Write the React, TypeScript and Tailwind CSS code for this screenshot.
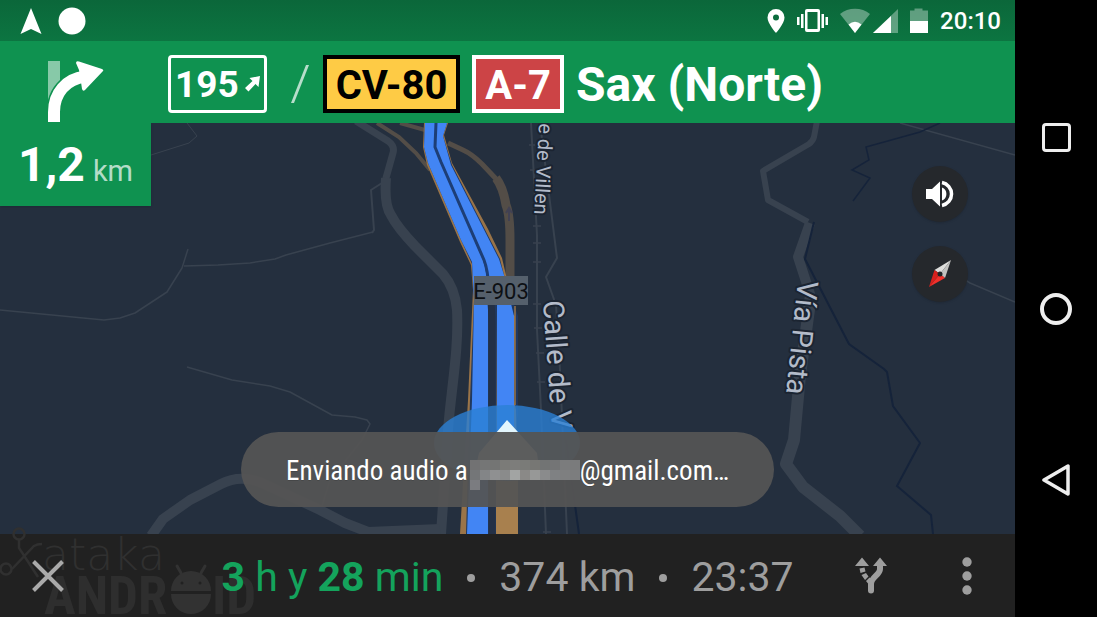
import React from "react";

function StatusBar() {
  return (
    <header className="flex h-[41px] items-center justify-between bg-linear-to-b from-[#0b673a] to-[#0c7541] pr-3.5 pl-5 text-white">
      <div className="flex items-center gap-4">
        <svg width="22" height="28" viewBox="0 0 22 28" fill="#fff" aria-hidden="true">
          <path d="M11 1 21.500 27 11 22 .5 27Z" />
        </svg>
        <svg width="28" height="28" viewBox="0 0 28 28" fill="#fff" aria-hidden="true">
          <circle cx="14" cy="14" r="13.500" />
        </svg>
      </div>
      <div className="flex items-center gap-3">
        <svg width="18" height="26" viewBox="0 0 18 26" fill="#fff" aria-hidden="true">
          <path fillRule="evenodd" d="M9 1a8.500 8.500 0 0 0-8.500 8.500C.5 15.500 9 25 9 25s8.500-9.500 8.500-15.500A8.500 8.500 0 0 0 9 1Zm0 5.500a3 3 0 1 1 0 6 3 3 0 0 1 0-6Z" />
        </svg>
        <svg width="31" height="26" viewBox="0 0 31 26" fill="#fff" aria-hidden="true">
          <path fillRule="evenodd" d="M10 1h11a2 2 0 0 1 2 2v19a2 2 0 0 1-2 2H10a2 2 0 0 1-2-2V3a2 2 0 0 1 2-2Zm.5 3v17h10V4Z" />
          <path d="M4 6h2.500v14H4zM0 9h2.500v8H0zM24.500 6H27v14h-2.500zM28.500 9H31v8h-2.500z" />
        </svg>
        <svg width="58" height="26" viewBox="0 0 58 26" fill="#fff" aria-hidden="true">
          <path opacity=".35" d="M0 6C8-1 22-1 30 6L15 25Z" />
          <path d="M8.500 16.500Q15 11 21.500 16.500L15 25Z" />
          <path opacity=".35" d="M58 1v24H33Z" />
          <path d="M51 8v17H33Z" />
        </svg>
        <svg width="18" height="26" viewBox="0 0 18 26" fill="#fff" aria-hidden="true">
          <path opacity=".35" d="M4.500 0.500h8v2H18V13H0V2.500h4.500z" />
          <path d="M0 13h18v12H0z" />
        </svg>
        <time className="text-2xl font-medium">20:10</time>
      </div>
    </header>
  );
}

function DirectionHeader() {
  return (
    <section className="relative z-10 flex h-[82px] items-center bg-[#0f9250] pt-1 text-white">
      <div className="flex w-[151px] shrink-0 self-end pl-12">
        <svg width="56" height="62" viewBox="0 0 56 62" aria-label="Gira a la derecha" role="img">
          <path d="M0 0h12v40H0z" fill="#fff" opacity=".5" />
          <path d="M6 61V51C6 32 18 18 37 15.500" fill="none" stroke="#0f9250" strokeWidth="15" />
          <path d="M6 61V51C6 32 18 18 37 15.500" fill="none" stroke="#fff" strokeWidth="12" />
          <path d="M28 2Q28-.5 31 .5L54 8Q56 9 55 10L37 29Q35 31 34 28L33 21 31 9Z" fill="#fff" />
        </svg>
      </div>
      <div className="flex items-center gap-3 pl-[17px] leading-none font-bold">
        <span className="flex h-[58px] items-center gap-1.5 rounded border-[3px] border-white px-1 text-[37px]">
          195
          <svg width="15" height="16" viewBox="0 0 15 16" fill="#fff" aria-hidden="true">
            <path d="M4.500 2 15 0 13.500 11 10.500 8 3.500 15.500 0 12 7.500 5Z" />
          </svg>
        </span>
        <span className="flex w-8 justify-end pr-0.5">
          <svg width="18" height="38" viewBox="0 0 18 38" aria-hidden="true">
            <path d="M15 0h3L3 38H0Z" fill="#fff" opacity=".7" />
          </svg>
        </span>
        <span className="flex h-[58px] items-center border-4 border-black bg-[#fecb45] px-[9px] pt-1 text-[40px] text-black">CV-80</span>
        <span className="flex h-[58px] items-center border-4 border-white bg-[#cc4446] px-[9px] pt-1 text-[40px]">A-7</span>
        <h1 className="pt-0.5 text-5xl whitespace-nowrap">Sax (Norte)</h1>
      </div>
    </section>
  );
}

function MapCanvas() {
  const label = "fill-[#b3bbc9] stroke-[#1b2431] stroke-[4px] font-normal";
  return (
    <svg className="absolute inset-0 h-full w-full" viewBox="0 123 1015 411" preserveAspectRatio="xMidYMid slice" role="img" aria-label="Mapa">
      <rect y="123" width="1015" height="411" fill="#242f3e" />
      <g fill="none" stroke="#38424f" strokeLinejoin="round">
        <path strokeWidth="1" d="M187 123 197 136 189 143 151 155" />
        <path strokeWidth="1.500" d="M0 310 104 320 120 318 135 313 167 292 182 268 188 249M184 266 218 265 250 263 275 259 286 255 330 243 373 232M187 367 232 380 270 386 290 392 332 415 355 417 367 420 370 424 362 440 330 480 322 506M900 123 1015 155M940 264 970 283 1015 302" />
        <path strokeWidth="2" d="M382 183 371 190 374 230 372 233M540 123 557 258 546 277 556 305 560 370 567 534" />
        <path strokeWidth="7" d="M356 121 388 141Q395 146 393 153L386 178Q384 205 391 215 397 227 415 246L443 274" />
        <path strokeWidth="10" d="M386 178Q384 205 391 215 397 227 415 246L443 274Q455 288 457 310C459 350 451 390 448 430L441 534" />
        <path strokeWidth="10" d="M151 536 163 519 190 500 221 484Q240 474 262 483L320 510 345 523 368 532 440 529" />
        <path strokeWidth="6" d="M817 121 814 137Q813 141 809 144L763 171 768 200 808 222" />
        <path strokeWidth="10" d="M810 223 798 257 811 297" />
        <path strokeWidth="12" d="M811 295 800 375 794 440 786 464 803 487 840 516 860 536" />
        <path strokeWidth="2" d="M531 123 537 235V330L541 410 546 534" />
        <path strokeWidth="1.500" d="M529 145h6M530 170h7M533 226h8M533 243h8M533 262h8M533 304h8M534 328h8M536 353h8M537 382h8M543 532h8" />
      </g>
      <g fill="none" stroke="#15233a" strokeWidth="2">
        <path d="M940 123 920 132 866 147 869 160 852 170 870 178 853 201" strokeWidth="1.500" />
        <path d="M814 222 805 259 849 344 884 369 887 372 893 406 920 443 897 486 931 515 933 534M566 440 579 534" />
      </g>
      <g fill="none" stroke="#534d47">
        <path strokeWidth="4" d="M377 123 399 137 416 153 430 170M400 123 425 130" />
        <path strokeWidth="5" d="M448 143 463 150Q472 154 482 164L499 182" />
        <path strokeWidth="9" d="M496 178Q503 187 506 205 510 215 510 240V290" />
      </g>
      <path d="M509 221v-13m-3 5 3-5 3 5" fill="none" stroke="#414153" strokeWidth="2" />

      <path d="M424 123 423 147 427 165 460 242 471 265 473 290 468 400 460 534H490V305H496V534H518L516 400V316L506 275 502 258 488 229 452 163 444 135 448 123Z" fill="#9a7448" />
      <path d="M425 123 424 147 428 163 461 240 472 264 474 300 470 400 466 534H496L497 305 515 316 514 400 518 420V316L504 275 500 259 452 165 443 136 447 123Z" fill="#20385f" />
      <path d="M425 123 424 147 428 163 461 240 472 262 474 300 472 400 467 534H488V300Q488 275 483 260L440 160 435 147 436 123Z" fill="#4285f4" />
      <path d="M436 123 435 147 440 160 483 258Q489 272 489 285L497 305V534H514V316L504 275 499 259 451 165 443 136 447 123Z" fill="#4285f4" />
      <path d="M436 123 435 147 441 162 484 260Q488 270 489 290" fill="none" stroke="#1d3e76" strokeWidth="3" />
      <path d="M489 290Q492 302 492 330V534" fill="none" stroke="#233046" strokeWidth="7" />
      <path d="M515 306V405" stroke="#9a7448" strokeWidth="1.500" />
      <path d="M496 475H518V534H496Z" fill="#a8804e" />

      <rect x="474" y="276" width="54" height="29" fill="#55606c" />
      <text x="501" y="299" textAnchor="middle" className="fill-[#0d1014] text-[22px]">E-903</text>
      <g paintOrder="stroke" strokeLinejoin="round">
        <text transform="translate(539 123) rotate(93)" className={label + " text-[20px]"}>e de Villen</text>
        <text transform="translate(543 301) rotate(86)" className={label + " text-[29px]"}>Calle de V</text>
        <text transform="translate(798 280) rotate(96)" className={label + " text-[29px]"}>Vía Pista</text>
      </g>
      <ellipse cx="507" cy="443" rx="73" ry="38" fill="#2a7fd4" opacity=".8" />
      <path d="M507 420 537 453 540 475 507 462 474 475 479 453Z" fill="#e3f6fd" />
    </svg>
  );
}

const mosaic = [
  "#727273", "#757676", "#747574", "#7b7b78", "#7d7d7b", "#7a7b78", "#777774", "#727474", "#747576", "#7b7c7d", "#7a7b7c",
  "#747678", "#838587", "#8f9091", "#8a8b8b", "#a2a4a3", "#8a8987", "#979897", "#8a8b8c", "#7f8183", "#7e7f80", "#7c7d7e",
];

function Toast() {
  return (
    <div role="status" className="flex h-[75px] items-center rounded-full bg-[#545454]/95 px-[45px] pt-1 text-[27px] whitespace-nowrap text-white text-shadow-2xs [font-family:'Roboto_Condensed',Roboto,sans-serif]">
      Enviando audio a
      <svg className="mt-1.5 ml-0.5" width="110" height="30" viewBox="0 0 110 30" shapeRendering="crispEdges" aria-hidden="true">
        {mosaic.map((color, i) => (
          <rect key={i} x={(i % 11) * 10} y={Math.floor(i / 11) * 10} width="10" height="10" fill={color} />
        ))}
        <rect y="20" width="10" height="10" fill="#7b7c80" />
      </svg>
      @gmail.com…
    </div>
  );
}

function RoundButton({ label, children }: { label: string; children: React.ReactNode }) {
  return (
    <button aria-label={label} className="flex size-14 items-center justify-center rounded-full bg-[#25282c] shadow-sm">
      {children}
    </button>
  );
}

function MapArea() {
  return (
    <section className="relative flex flex-1 flex-col justify-between overflow-hidden">
      <MapCanvas />
      <div className="relative flex items-start justify-between pr-[47px]">
        <p className="flex h-[83px] w-[151px] items-baseline justify-center gap-2 bg-[#0f9250] pt-2.5 leading-none text-white shadow">
          <span className="text-5xl leading-16 font-bold">1,2</span>
          <span className="text-[29px] text-white/70">km</span>
        </p>
        <div className="flex flex-col gap-6 pt-[43px]">
          <RoundButton label="Sonido">
            <svg width="28" height="28" viewBox="0 0 28 28" fill="#fff" aria-hidden="true">
              <path d="M0 9h6l8-7.500v25L6 19H0zM16 7.500a7 7 0 0 1 0 13z" />
              <path d="M16 2.500A11.700 11.700 0 0 1 16 25.500" fill="none" stroke="#fff" strokeWidth="3.500" />
            </svg>
          </RoundButton>
          <RoundButton label="Brújula">
            <svg width="28" height="30" viewBox="0 0 28 30" aria-hidden="true">
              <path d="M25 1 8.500 11 14 15Z" fill="#dededc" />
              <path d="M25 1 19 19 14 15Z" fill="#c2c2c0" />
              <path d="M3 28 8.500 11 14 15Z" fill="#d8201d" />
              <path d="M3 28 19 19 14 15Z" fill="#f1302b" />
              <circle cx="14" cy="15" r="2.500" fill="#202326" />
            </svg>
          </RoundButton>
        </div>
      </div>
      <div className="relative flex justify-center pb-[27px]">
        <Toast />
      </div>
    </section>
  );
}

function Watermark() {
  return (
    <svg className="pointer-events-none absolute bottom-0 left-0" width="270" height="90" viewBox="0 0 270 90" aria-hidden="true">
      <g fill="none" stroke="#303030" strokeWidth="2.500">
        <circle cx="19" cy="7" r="5.500" />
        <circle cx="6" cy="42" r="5.500" />
        <path d="M19 13v8L38 50M12 42 34 19Q37 17 42 17" />
      </g>
      <text x="42" y="43" className="fill-[#303030] text-[44px] font-extralight [font-family:'DejaVu_Sans',sans-serif]">ataka</text>
      <g className="fill-[#2e2e2e] text-[53px] font-bold [font-family:'Roboto_Condensed',sans-serif]">
        <text x="44" y="87">ANDR</text>
        <text x="212" y="87">ID</text>
      </g>
      <g fill="#323232">
        <path d="M171 64a20 20 0 0 1 40 0ZM171 67h40a20 20 0 0 1-40 0Z" />
        <path d="M181 46 177 39M201 46 205 39" stroke="#323232" strokeWidth="3" strokeLinecap="round" />
        <circle cx="182" cy="56" r="1.500" fill="#212121" />
        <circle cx="200" cy="56" r="1.500" fill="#212121" />
      </g>
    </svg>
  );
}

function TripBar() {
  return (
    <footer className="relative grid h-[83px] grid-cols-[1fr_auto_1fr] items-center bg-[#212121] text-[#9e9e9e]">
      <Watermark />
      <button aria-label="Cerrar" className="relative flex h-full w-24 items-center justify-center">
        <svg width="32" height="32" viewBox="0 0 32 32" fill="none" stroke="#aaa" strokeWidth="4" aria-hidden="true">
          <path d="M1.500 1.500 30.500 30.500M30.500 1.500 1.500 30.500" />
        </svg>
      </button>
      <p className="relative flex items-center gap-6 pt-1 text-[41px] leading-none whitespace-nowrap">
        <span className="text-[#14a35c]">
          <b>3</b> h y <b>28</b> min
        </span>
        <span className="size-2 rounded-full bg-[#9e9e9e]" />
        <span>374 km</span>
        <span className="size-2 rounded-full bg-[#9e9e9e]" />
        <span>23:37</span>
      </p>
      <div className="flex h-full justify-end">
        <button aria-label="Rutas alternativas" className="flex w-24 items-center justify-center">
          <svg width="32" height="37" viewBox="0 0 32 37" fill="#9e9e9e" aria-hidden="true">
            <path d="M7 .5 14 9H0ZM25 .5 32 9H18Z" />
            <path d="M25 8v4C25 18 16 20 16 27v6" fill="none" stroke="#9e9e9e" strokeWidth="6" />
            <path d="M13 32h6v1.500a3 3 0 0 1-6 0z" />
            <path d="M4.500 11.500 9.500 10.500 10.500 14.500 5.500 16ZM6.500 18 11 16 13.500 19.500 10 23ZM11 24 14.500 20.500 19 24 15 29Z" />
          </svg>
        </button>
        <button aria-label="Más opciones" className="flex w-24 items-center justify-center">
          <svg width="10" height="38" viewBox="0 0 10 38" fill="#9e9e9e" aria-hidden="true">
            <circle cx="5" cy="5" r="4.700" />
            <circle cx="5" cy="19" r="4.700" />
            <circle cx="5" cy="33" r="4.700" />
          </svg>
        </button>
      </div>
    </footer>
  );
}

function SystemNav() {
  return (
    <nav aria-label="Sistema" className="flex w-[82px] shrink-0 flex-col bg-black py-[52px]">
      <button aria-label="Recientes" className="flex flex-1 items-center justify-center">
        <span className="size-[29px] rounded-sm border-[3px] border-[#eee]" />
      </button>
      <button aria-label="Inicio" className="flex flex-1 items-center justify-center">
        <span className="size-8 rounded-full border-4 border-[#eee]" />
      </button>
      <button aria-label="Atrás" className="flex flex-1 items-center justify-center">
        <svg width="28" height="32" viewBox="0 0 28 32" fill="none" stroke="#eee" strokeWidth="3.500" strokeLinejoin="round" aria-hidden="true">
          <path d="M26 2v28L2 16Z" />
        </svg>
      </button>
    </nav>
  );
}

export default function App() {
  return (
    <div className="flex min-h-screen bg-black [font-family:Roboto,sans-serif]">
      <main className="flex min-w-0 flex-1 flex-col">
        <StatusBar />
        <DirectionHeader />
        <MapArea />
        <TripBar />
      </main>
      <SystemNav />
    </div>
  );
}
